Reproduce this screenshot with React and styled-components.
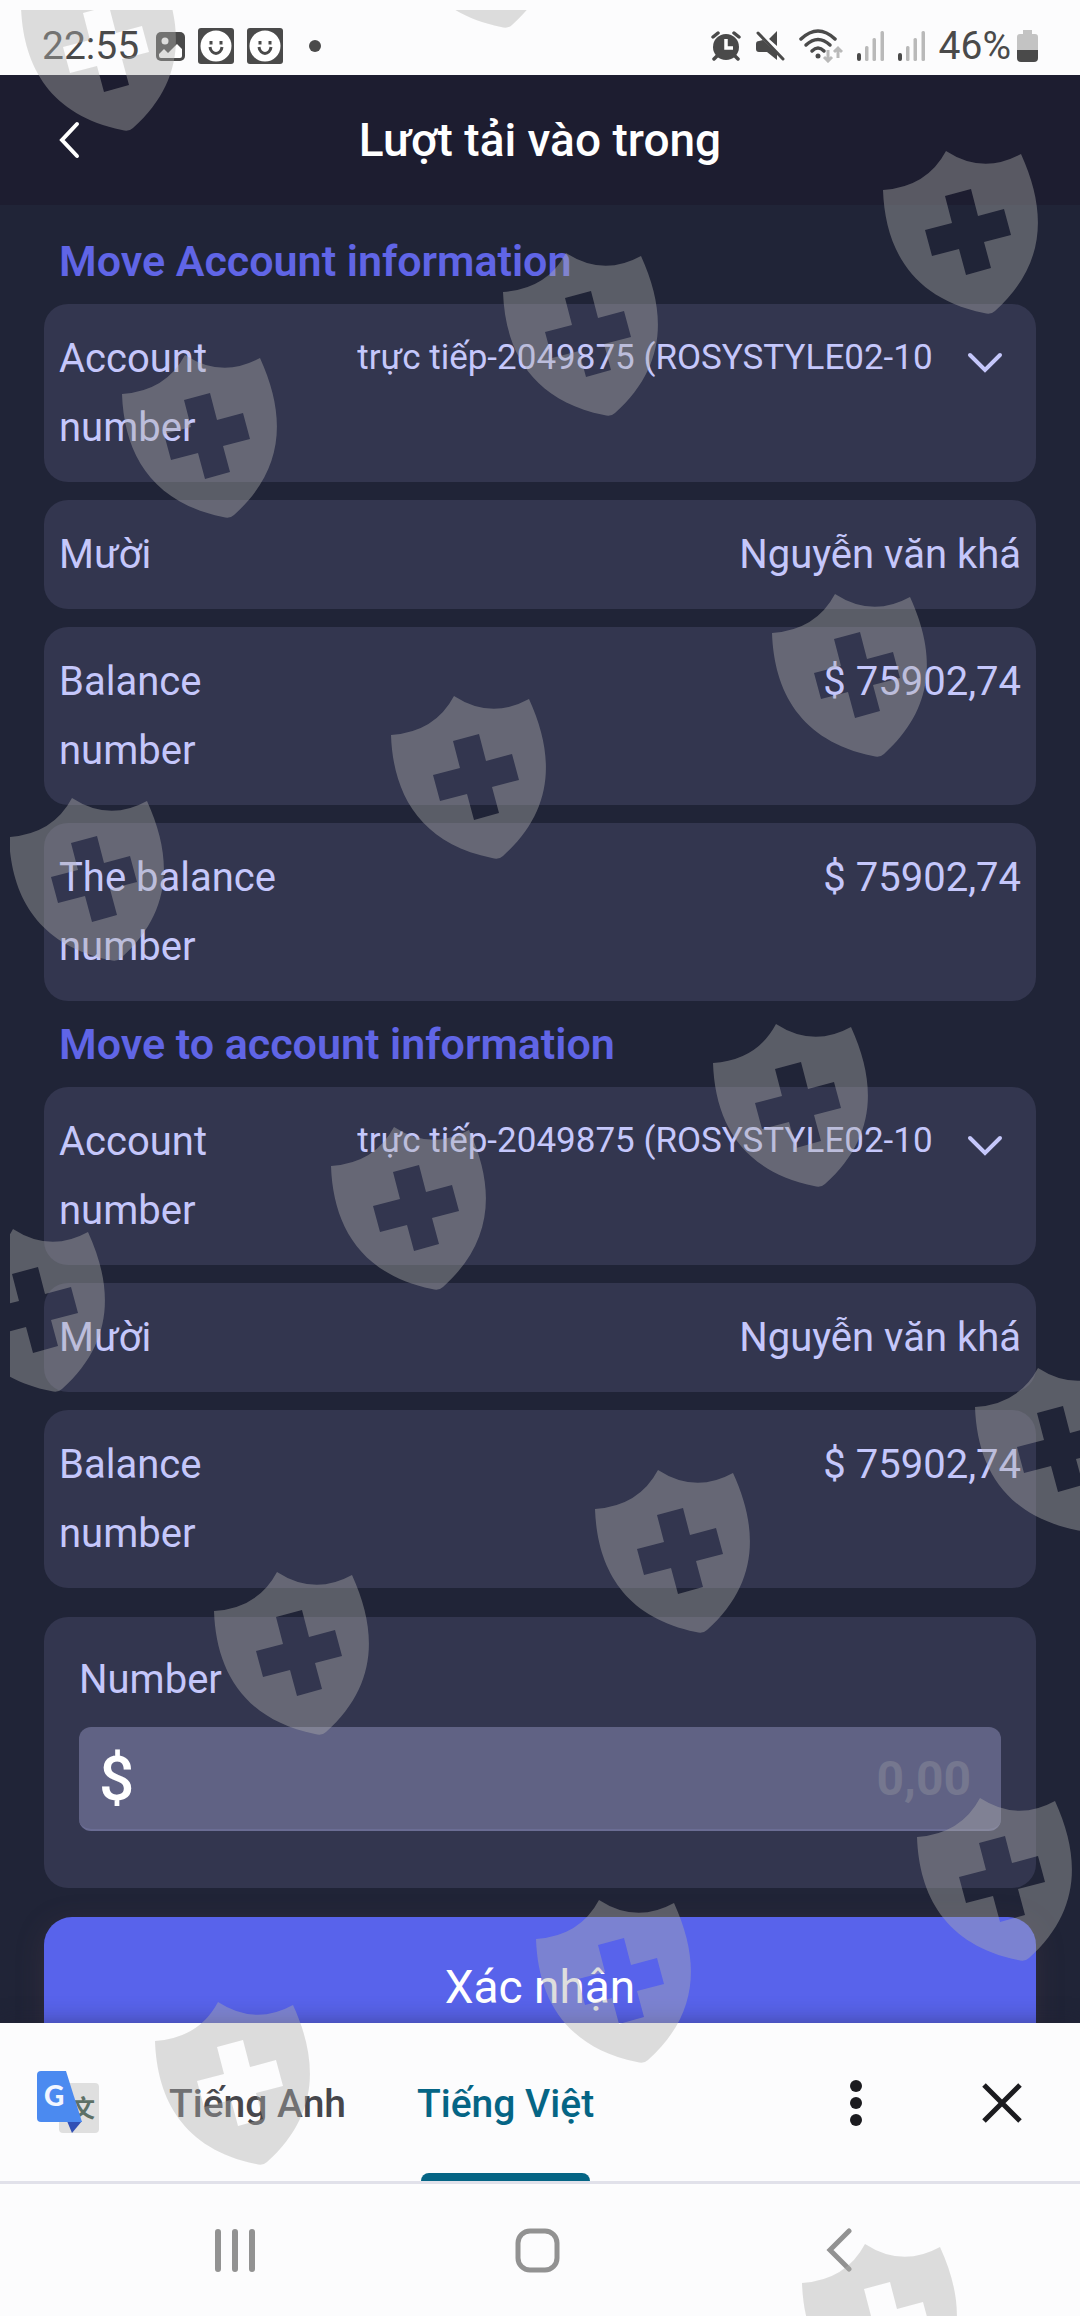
import React from 'react'
import styled, { createGlobalStyle, ThemeProvider } from 'styled-components'

const theme = {
	page: '#202437',
	header: '#1d1d30',
	card: '#33364f',
	field: '#606284',
	fieldEdge: '#6b6d94',
	text: '#c5c7fb',
	heading: '#6065e6',
	primary: '#5863eb',
	light: '#fcfcfd',
	status: '#4a4a4a',
	statusDim: '#b9b9b9',
	nav: '#929292',
	ink: '#1b1b1f',
	tab: '#46464b',
	tabActive: '#056585',
}

const GlobalStyle = createGlobalStyle`
	* {
		box-sizing: border-box;
	}
	body {
		margin: 0;
		font-family: Roboto, "Noto Sans", sans-serif;
		background: ${theme.page};
	}
	button, input, select {
		font-family: inherit;
	}
	svg {
		display: block;
		flex: none;
	}
`

const Screen = styled.div`
	position: relative;
	display: flex;
	flex-direction: column;
	height: 100vh;
	overflow: hidden;
	background: ${(props) => props.theme.page};
`

const StatusBar = styled.div`
	display: flex;
	flex: none;
	justify-content: space-between;
	height: 75px;
	padding: 17px 42px 0;
	font-size: 39px;
	line-height: 58px;
	color: ${(props) => props.theme.status};
	background: ${(props) => props.theme.light};
`
const StatusGroup = styled.div`
	display: flex;
	align-items: center;
	gap: ${(props) => props.$gap}px;
`
const Clock = styled.span`
	margin-right: 4px;
`

const Header = styled.header`
	display: grid;
	flex: none;
	grid-template-columns: 1fr auto 1fr;
	align-items: center;
	height: 130px;
	padding: 0 44px;
	background: ${(props) => props.theme.header};
`
const BackButton = styled.button`
	justify-self: start;
	padding: 12px 14px;
	border: 0;
	background: none;
`
const Title = styled.h1`
	margin: 0;
	font-size: 46px;
	font-weight: 500;
	line-height: 60px;
	color: #fff;
`

const Content = styled.main`
	flex: 1;
	min-height: 0;
	padding: 13px 44px 0;
	overflow-y: auto;
	scrollbar-width: none;
`
const Heading = styled.h2`
	margin: 0;
	padding: 0 15px;
	font-size: 43px;
	font-weight: 600;
	line-height: 86px;
	color: ${(props) => props.theme.heading};
`
const Rows = styled.div`
	display: flex;
	flex-direction: column;
	gap: 18px;
`
const Row = styled.div`
	display: flex;
	align-items: flex-start;
	justify-content: space-between;
	padding: 20px 15px;
	border-radius: 24px;
	font-size: 40px;
	line-height: 69px;
	color: ${(props) => props.theme.text};
	background: ${(props) => props.theme.card};
`
const RowLabel = styled.label`
	width: 25%;
`
const RowValue = styled.span`
	text-align: right;
`
const SelectBox = styled.div`
	position: relative;
	width: 69%;

	svg {
		position: absolute;
		top: 28px;
		right: 18px;
		pointer-events: none;
	}
`
const Select = styled.select`
	display: block;
	width: 100%;
	height: 66px;
	padding: 0 88px 0 0;
	border: 0;
	font-size: 35px;
	color: ${(props) => props.theme.text};
	background: none;
	appearance: none;
`

const AmountCard = styled.div`
	margin-top: 29px;
	padding: 28px 35px 57px;
	border-radius: 24px;
	background: ${(props) => props.theme.card};
`
const AmountLabel = styled.label`
	display: block;
	margin-bottom: 13px;
	font-size: 40px;
	line-height: 69px;
	color: ${(props) => props.theme.text};
`
const AmountField = styled.div`
	display: flex;
	align-items: center;
	height: 104px;
	padding: 0 30px 0 20px;
	border-bottom: 2px solid ${(props) => props.theme.fieldEdge};
	border-radius: 12px;
	background: ${(props) => props.theme.field};
`
const Currency = styled.span`
	font-size: 62px;
	font-weight: 500;
	color: #fff;
`
const AmountInput = styled.input`
	flex: 1;
	min-width: 0;
	padding: 0;
	border: 0;
	outline: 0;
	font-size: 48px;
	font-weight: 700;
	text-align: right;
	color: #fff;
	background: none;

	&::placeholder {
		color: #75778f;
		opacity: 1;
	}
`
const Confirm = styled.button`
	width: 100%;
	height: 140px;
	margin-top: 29px;
	border: 0;
	border-radius: 28px;
	font-size: 46px;
	color: #fff;
	background: ${(props) => props.theme.primary};
	box-shadow: 0 6px 28px rgba(90, 64, 74, 0.3);
`

const TranslateBar = styled.div`
	position: relative;
	display: flex;
	flex: none;
	align-items: stretch;
	height: 161px;
	padding: 0 50px 0 37px;
	border-bottom: 3px solid #e1e1ea;
	background: ${(props) => props.theme.light};
	box-shadow: 0 0 22px rgba(32, 32, 48, 0.45);

	> svg {
		align-self: center;
	}
`
const Tabs = styled.div`
	display: flex;
	flex: 1;
	gap: 71px;
	padding-left: 70px;
`
const Tab = styled.button`
	position: relative;
	padding: 4px 0 0;
	border: 0;
	font-size: 39px;
	font-weight: 500;
	color: ${(props) => (props.$active ? props.theme.tabActive : props.theme.tab)};
	background: none;

	&::after {
		content: '';
		position: absolute;
		right: 4px;
		bottom: 0;
		left: 4px;
		height: 8px;
		border-radius: 8px 8px 0 0;
		background: ${(props) => (props.$active ? props.theme.tabActive : 'none')};
	}
`
const BarActions = styled.div`
	display: flex;
	align-items: center;
	gap: 104px;
	padding-top: 2px;
`
const IconButton = styled.button`
	display: flex;
	align-items: center;
	justify-content: center;
	padding: 0 8px;
	border: 0;
	background: none;
`
// positioned so that the shadow of the bar above stays under it
const NavBar = styled.nav`
	position: relative;
	display: flex;
	flex: none;
	height: 132px;
	padding: 0 90px 0 84px;
	background: ${(props) => props.theme.light};
`
const NavButton = styled(IconButton)`
	flex: 1;
`

const Overlay = styled.div`
	position: absolute;
	inset: 10px 0 0 10px;
	overflow: hidden;
	pointer-events: none;

	svg {
		width: 100%;
		height: 100%;
	}
`

// top left corner of every shield on the overlay
const shields = [
	[11, -42], [390, -145], [873, 141], [493, 243], [112, 345], [762, 584],
	[381, 686], [-1, 788], [703, 1014], [321, 1117], [-60, 1219], [965, 1358],
	[585, 1460], [204, 1562], [907, 1788], [526, 1890], [145, 1992], [792, 2234],
]

const shieldPath = 'M0 39Q44 36 63 0Q100 24 138 3C165 62 162 115 112 160Q108 164 101 162C28 147 2 97 0 39Z'
	+ 'M62 45L69 72L42 79L49 105L76 98L83 124L108 117L101 91L128 84L121 58L95 65L88 38Z'

const ShieldOverlay = () => (
	<Overlay aria-hidden="true">
		<svg>
			{shields.map(([x, y]) => (
				<path key={`${x},${y}`} transform={`translate(${x} ${y})`} d={shieldPath} fill="#afafac" fillOpacity="0.41" fillRule="evenodd" />
			))}
		</svg>
	</Overlay>
)

const PhotoIcon = () => (
	<svg width="29" height="29" viewBox="0 0 29 29">
		<rect width="29" height="29" rx="5" fill={theme.status} />
		<circle cx="9" cy="9" r="3.5" fill="#fff" />
		<path d="M3 22L8 17L12 21L21 12L26 17V24Q26 26 24 26H5Q3 26 3 24Z" fill="#fff" />
	</svg>
)

const SmileIcon = () => (
	<svg width="36" height="36" viewBox="0 0 36 36">
		<rect width="36" height="36" rx="3" fill={theme.status} />
		<circle cx="18" cy="18" r="15.5" fill="#fff" />
		<path d="M13 13V16.500M23 13V16.500M12 19C13 27.500 23 27.500 24 19" fill="none" stroke={theme.status} strokeWidth="3" />
	</svg>
)

const DotIcon = () => (
	<svg width="38" height="36" viewBox="0 0 38 36">
		<circle cx="19" cy="18" r="6" fill={theme.status} />
	</svg>
)

const AlarmIcon = () => (
	<svg width="30" height="30" viewBox="0 0 30 30">
		<circle cx="15" cy="16" r="13" fill={theme.status} />
		<path d="M2 6L7 2M28 6L23 2M6 25L3 28M24 25L27 28" stroke={theme.status} strokeWidth="3.5" strokeLinecap="round" />
		<path d="M15 8V17H22" fill="none" stroke="#fff" strokeWidth="3.5" />
	</svg>
)

const MuteIcon = () => (
	<svg width="30" height="30" viewBox="0 0 30 30">
		<path d="M8 9L22 23V29L12 21H4Q1 21 1 18V13Q1 10 4 10ZM14 8L22 0V15Z" fill={theme.status} />
		<path d="M5 1L29 26" stroke={theme.light} strokeWidth="3" />
		<path d="M3 2L28 28" stroke={theme.status} strokeWidth="3" strokeLinecap="round" />
	</svg>
)

const WifiIcon = () => (
	<svg width="44" height="34" viewBox="0 0 44 34">
		<g fill="none" stroke={theme.status} strokeWidth="3.5" strokeLinecap="round">
			<path d="M2 10Q19 -6 36 10" />
			<path d="M7 16Q19 5 31 16" />
			<path d="M13 22Q19 16 25 22" />
		</g>
		<circle cx="19" cy="27" r="2.5" fill={theme.status} />
		<path d="M29 21V32M25 28L29 32L33 28M39 29V19M35 23L39 19L43 23" fill="none" stroke={theme.statusDim} strokeWidth="3" />
	</svg>
)

const SignalIcon = () => (
	<svg width="27" height="30" viewBox="0 0 27 30">
		<rect x="0" y="22" width="4" height="8" rx="2" fill={theme.status} />
		<rect x="8" y="15" width="3.5" height="15" rx="1.5" fill={theme.statusDim} />
		<rect x="15.5" y="7" width="3.5" height="23" rx="1.5" fill={theme.statusDim} />
		<rect x="23.5" y="0" width="3.5" height="30" rx="1.5" fill={theme.statusDim} />
	</svg>
)

const BatteryIcon = () => (
	<svg width="21" height="32" viewBox="0 0 21 32">
		<path d="M6 0H15V4H18Q21 4 21 7V20H0V7Q0 4 3 4H6Z" fill="#c3c3c3" />
		<path d="M0 20H21V28Q21 32 17 32H4Q0 32 0 28Z" fill={theme.status} />
	</svg>
)

const ChevronDown = () => (
	<svg width="36" height="22" viewBox="0 0 36 22">
		<path d="M3 3L18 18L33 3" fill="none" stroke={theme.text} strokeWidth="4" strokeLinecap="round" />
	</svg>
)

const TranslateIcon = () => (
	<svg width="62" height="62" viewBox="0 0 62 62">
		<rect x="22" y="12" width="40" height="50" rx="4" fill="#dfdfdf" />
		<text x="34" y="46" fontSize="24" fontWeight="700" fontFamily='"Noto Sans CJK SC", sans-serif' fill="#5d7066">文</text>
		<path d="M30 50H45L35 62Z" fill="#3150b5" />
		<path d="M4 0H29L45 51H4Q0 51 0 47V4Q0 0 4 0Z" fill="#4b8af0" />
		<text x="7" y="35" fontSize="28" fontWeight="900" fontFamily="Lato, sans-serif" fill="#f2f6ff">G</text>
	</svg>
)

const SelectRow = ({ id }) => (
	<Row>
		<RowLabel htmlFor={id}>Account number</RowLabel>
		<SelectBox>
			<Select id={id}>
				<option>trực tiếp-2049875 (ROSYSTYLE02-10</option>
			</Select>
			<ChevronDown />
		</SelectBox>
	</Row>
)

const InfoRow = ({ label, value }) => (
	<Row>
		<RowLabel as="span">{label}</RowLabel>
		<RowValue>{value}</RowValue>
	</Row>
)

export default function App() {
	return (
		<ThemeProvider theme={theme}>
			<GlobalStyle />
			<Screen>
				<StatusBar>
					<StatusGroup $gap={13}>
						<Clock>22:55</Clock>
						<PhotoIcon />
						<SmileIcon />
						<SmileIcon />
						<DotIcon />
					</StatusGroup>
					<StatusGroup $gap={14}>
						<AlarmIcon />
						<MuteIcon />
						<WifiIcon />
						<SignalIcon />
						<SignalIcon />
						<StatusGroup $gap={6}>
							<span>46%</span>
							<BatteryIcon />
						</StatusGroup>
					</StatusGroup>
				</StatusBar>

				<Header>
					<BackButton aria-label="Back">
						<svg width="22" height="38" viewBox="0 0 22 38">
							<path d="M19 3L4 19L19 35" fill="none" stroke="#fff" strokeWidth="4" strokeLinecap="round" />
						</svg>
					</BackButton>
					<Title>Lượt tải vào trong</Title>
				</Header>

				<Content>
					<Heading>Move Account information</Heading>
					<Rows>
						<SelectRow id="from-account" />
						<InfoRow label="Mười" value="Nguyễn văn khá" />
						<InfoRow label="Balance number" value="$ 75902,74" />
						<InfoRow label="The balance number" value="$ 75902,74" />
					</Rows>

					<Heading>Move to account information</Heading>
					<Rows>
						<SelectRow id="to-account" />
						<InfoRow label="Mười" value="Nguyễn văn khá" />
						<InfoRow label="Balance number" value="$ 75902,74" />
					</Rows>

					<AmountCard>
						<AmountLabel htmlFor="amount">Number</AmountLabel>
						<AmountField>
							<Currency>$</Currency>
							<AmountInput id="amount" inputMode="decimal" placeholder="0,00" />
						</AmountField>
					</AmountCard>
					<Confirm>Xác nhận</Confirm>
				</Content>

				<TranslateBar>
					<TranslateIcon />
					<Tabs>
						<Tab>Tiếng Anh</Tab>
						<Tab $active>Tiếng Việt</Tab>
					</Tabs>
					<BarActions>
						<IconButton aria-label="More options">
							<svg width="12" height="48" viewBox="0 0 12 48">
								<circle cx="6" cy="7" r="6" fill={theme.ink} />
								<circle cx="6" cy="24" r="6" fill={theme.ink} />
								<circle cx="6" cy="41" r="6" fill={theme.ink} />
							</svg>
						</IconButton>
						<IconButton aria-label="Close">
							<svg width="40" height="40" viewBox="0 0 40 40">
								<path d="M2 2L38 38M38 2L2 38" stroke={theme.ink} strokeWidth="5" />
							</svg>
						</IconButton>
					</BarActions>
				</TranslateBar>

				<NavBar>
					<NavButton aria-label="Recent apps">
						<svg width="40" height="43" viewBox="0 0 40 43">
							<path d="M3 3V40M20 3V40M37 3V40" stroke={theme.nav} strokeWidth="6" strokeLinecap="round" />
						</svg>
					</NavButton>
					<NavButton aria-label="Home">
						<svg width="45" height="45" viewBox="0 0 45 45">
							<rect x="3" y="3" width="39" height="39" rx="12" fill="none" stroke={theme.nav} strokeWidth="5" />
						</svg>
					</NavButton>
					<NavButton aria-label="Go back">
						<svg width="26" height="44" viewBox="0 0 26 44">
							<path d="M23 3L4 22L23 41" fill="none" stroke={theme.nav} strokeWidth="5" strokeLinecap="round" />
						</svg>
					</NavButton>
				</NavBar>

				<ShieldOverlay />
			</Screen>
		</ThemeProvider>
	)
}
